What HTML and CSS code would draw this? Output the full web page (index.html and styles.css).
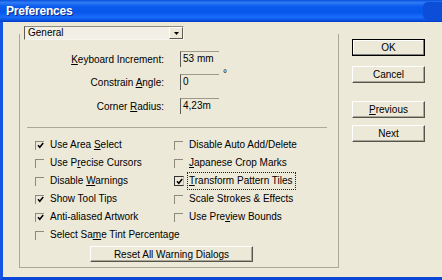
FILE: index.html
```html
<!DOCTYPE html>
<html>
<head>
<meta charset="utf-8">
<link rel="stylesheet" href="styles.css">
</head>
<body>
<div class="window">
  <div class="titlebar">
    <span class="title">Preferences</span>
    <span class="tb-btn"></span>
  </div>
  <div class="body">
    <div class="group">
      <div class="combo">
        <span class="combo-text">General</span>
        <span class="combo-btn"><svg width="5" height="3" viewBox="0 0 5 3"><path d="M0 0H5L2.5 3Z" fill="#000"/></svg></span>
      </div>
      <div class="field f1">
        <span class="flabel"><u>K</u>eyboard Increment:</span>
        <span class="input">53 mm</span>
      </div>
      <div class="field f2">
        <span class="flabel">Constrain <u>A</u>ngle:</span>
        <span class="input">0</span>
        <span class="deg">°</span>
      </div>
      <div class="field f3">
        <span class="flabel">Corner <u>R</u>adius:</span>
        <span class="input">4,23m</span>
      </div>
      <div class="sep"></div>
      <div class="checks">
        <div class="item"><span class="box checked"><svg width="7" height="7" viewBox="0 0 7 7"><path d="M1 3.2L2.8 5.3L6.2 1" fill="none" stroke="#000" stroke-width="1.5"/></svg></span><span class="lbl">Use Area <u>S</u>elect</span></div>
        <div class="item"><span class="box"></span><span class="lbl">Disable Auto Add/Delete</span></div>
        <div class="item"><span class="box"></span><span class="lbl">Use P<u>r</u>ecise Cursors</span></div>
        <div class="item"><span class="box"></span><span class="lbl"><u>J</u>apanese Crop Marks</span></div>
        <div class="item"><span class="box"></span><span class="lbl">Disable <u>W</u>arnings</span></div>
        <div class="item"><span class="box checked focusbox"><svg width="7" height="7" viewBox="0 0 7 7"><path d="M1 3.2L2.8 5.3L6.2 1" fill="none" stroke="#000" stroke-width="1.5"/></svg></span><span class="lbl focus"><u>T</u>ransform Pattern Tiles</span></div>
        <div class="item"><span class="box checked"><svg width="7" height="7" viewBox="0 0 7 7"><path d="M1 3.2L2.8 5.3L6.2 1" fill="none" stroke="#000" stroke-width="1.5"/></svg></span><span class="lbl">Show Tool Tips</span></div>
        <div class="item"><span class="box"></span><span class="lbl">Scale Strokes &amp; Effects</span></div>
        <div class="item"><span class="box checked"><svg width="7" height="7" viewBox="0 0 7 7"><path d="M1 3.2L2.8 5.3L6.2 1" fill="none" stroke="#000" stroke-width="1.5"/></svg></span><span class="lbl">Anti-aliased Artwork</span></div>
        <div class="item"><span class="box"></span><span class="lbl">Use Pre<u>v</u>iew Bounds</span></div>
        <div class="item"><span class="box"></span><span class="lbl">Select Sa<u>m</u>e Tint Percentage</span></div>
        <div class="item"></div>
      </div>
      <div class="btn reset">Reset All Warning Dialogs</div>
    </div>
    <div class="buttons">
      <div class="btn default">OK</div>
      <div class="btn cancel">Cancel</div>
      <div class="btn prev"><u>P</u>revious</div>
      <div class="btn next">Next</div>
    </div>
  </div>
</div>
</body>
</html>
```
FILE: styles.css
```css
* { box-sizing: border-box; }
html, body { margin: 0; padding: 0; background: #ECE9D8; }
body {
  font-family: "Liberation Sans", Arial, sans-serif;
  font-size: 10px;
  color: #000;
}
u { text-decoration: underline; text-underline-offset: 1px; }

.window {
  width: 442px;
  height: 280px;
  display: flex;
  flex-direction: column;
  background: #ECE9D8;
  overflow: hidden;
}

.titlebar {
  height: 22px;
  flex: none;
  display: flex;
  align-items: center;
  justify-content: space-between;
  padding-left: 6px;
  background: linear-gradient(to bottom, #0a4fdc 0%, #2f7cf6 12%, #0b5cee 28%, #0756ea 55%, #1a6cfb 78%, #0c55e4 90%, #0039c4 100%);
}
.title {
  color: #fff;
  font-weight: bold;
  font-size: 12px;
  letter-spacing: -0.2px;
  text-shadow: 1px 1px 0 #0b2a8c;
}
.tb-btn {
  width: 19px;
  height: 18px;
  background: #0d4ed8;
  border-radius: 5px 0 0 5px;
}

.body {
  flex: 1;
  display: flex;
  align-items: flex-start;
  border-left: 3px solid #1554e2;
  border-bottom: 3px solid #0a47d6;
  padding: 12px 0 0 16px;
}

.group {
  width: 320px;
  height: 234px;
  flex: none;
  border: 1px solid #aca899;
  border-top: none;
  display: flex;
  flex-direction: column;
  align-items: flex-start;
}

.combo {
  margin: -8px 0 0 4px;
  width: 160px;
  height: 14px;
  display: flex;
  align-items: stretch;
  border-top: 1px solid #8e8b7e;
  border-left: 1px solid #5d5b52;
  border-right: 1px solid #f6f5ee;
  border-bottom: 1px solid #f6f5ee;
  background: #f1efe6;
}
.combo-text {
  flex: 1;
  padding-left: 3px;
  line-height: 12px;
}
.combo-btn {
  width: 14px;
  display: flex;
  align-items: center;
  justify-content: center;
  border-right: 1px solid #5d5b52;
  border-bottom: 1px solid #5d5b52;
  border-top: 1px solid #fff;
  border-left: 1px solid #fff;
  background: #ECE9D8;
}

.field {
  display: flex;
  align-items: center;
  height: 16px;
}
.f1 { margin-top: 11px; }
.f2 { margin-top: 7px; }
.f3 { margin-top: 8px; }
.flabel {
  width: 144px;
  text-align: right;
}
.input {
  margin-left: 16px;
  width: 39px;
  height: 16px;
  line-height: 14px;
  padding-left: 2px;
  border-top: 1px solid #9d9a8c;
  border-left: 1px solid #5d5b52;
  white-space: nowrap;
  overflow: hidden;
}
.deg {
  align-self: flex-start;
  margin: -5px 0 0 4px;
  font-size: 10px;
  line-height: 10px;
}

.sep {
  margin: 13px 0 0 7px;
  width: 300px;
  height: 1px;
  background: #aca899;
}

.checks {
  margin: 8px 0 0 15px;
  display: grid;
  grid-template-columns: 139px auto;
  grid-auto-rows: 18px;
}
.item {
  display: flex;
  align-items: center;
  white-space: nowrap;
}
.box {
  width: 9px;
  height: 9px;
  margin-right: 6px;
  flex: none;
  display: flex;
  align-items: center;
  justify-content: center;
  border-top: 1px solid #8e8b7e;
  border-left: 1px solid #8e8b7e;
}
.box.focusbox {
  width: 10px;
  height: 10px;
  margin-right: 5px;
  border: 1px solid #333;
  border-right-color: #b9b6a8;
}
.lbl { line-height: 14px; }
.lbl.focus {
  outline: 1px dotted #222;
  outline-offset: 1px;
  padding-right: 1px;
}

.btn {
  display: flex;
  align-items: center;
  justify-content: center;
  background: #ECE9D8;
  border-top: 1px solid #fff;
  border-left: 1px solid #fff;
  border-right: 1px solid #56554c;
  border-bottom: 1px solid #56554c;
  box-shadow: inset -1px -1px 0 #aca899;
  white-space: nowrap;
}
.reset {
  margin: 2px 0 0 70px;
  width: 163px;
  height: 16px;
}

.buttons {
  margin: 5px 0 0 13px;
  display: flex;
  flex-direction: column;
}
.buttons .btn {
  width: 73px;
  height: 17px;
}
.btn.default {
  border: 1px solid #000;
  box-shadow: inset -1px -1px 0 #808080, inset 1px 1px 0 #fff;
}
.cancel { margin-top: 10px; }
.prev { margin-top: 18px; }
.next { margin-top: 7px; }
```
